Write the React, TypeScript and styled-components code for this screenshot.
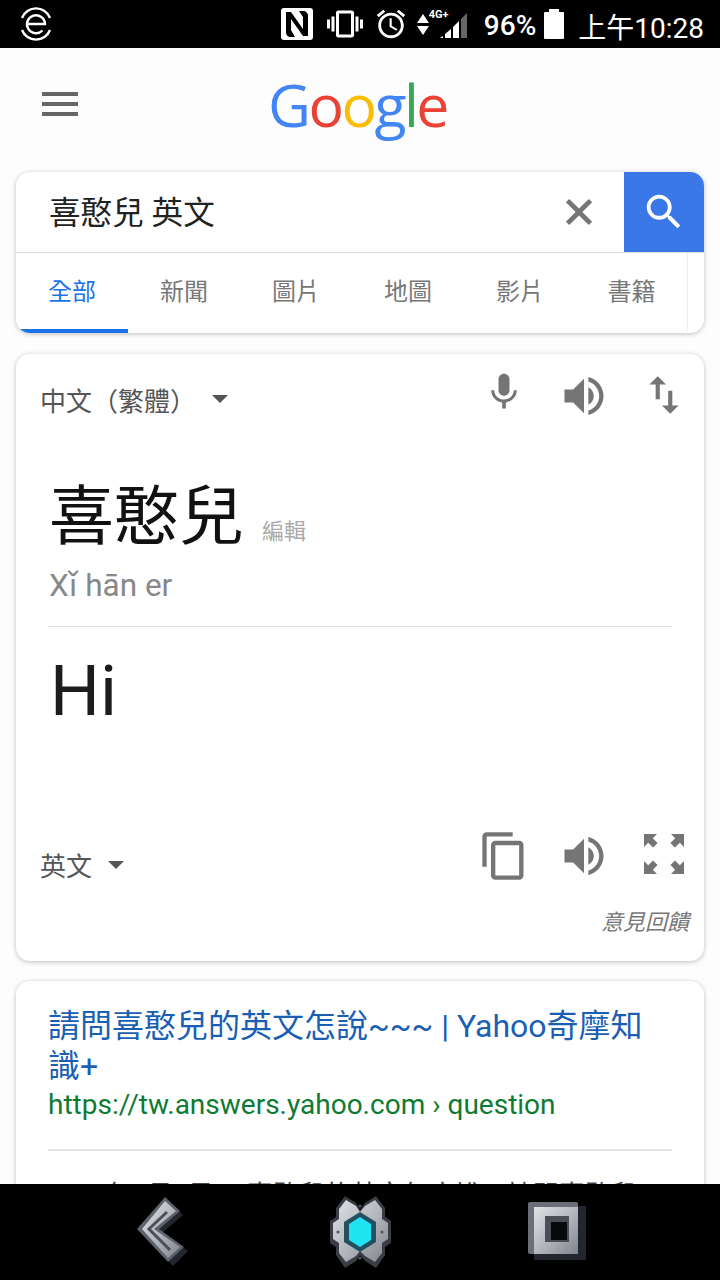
import React from 'react';
import styled, { createGlobalStyle } from 'styled-components';

const TABS = ['全部', '新聞', '圖片', '地圖', '影片', '書籍'];
const LOGO = [
  { letter: 'G', color: '#4285f4' },
  { letter: 'o', color: '#ea4335' },
  { letter: 'o', color: '#fbbc05' },
  { letter: 'g', color: '#4285f4' },
  { letter: 'l', color: '#34a853' },
  { letter: 'e', color: '#ea4335' },
];

const ICONS = {
  mic: 'M12 14c1.66 0 3-1.34 3-3V5c0-1.66-1.34-3-3-3S9 3.34 9 5v6c0 1.66 1.34 3 3 3zm5.3-3c0 3-2.54 5.1-5.3 5.1S6.7 14 6.7 11H5c0 3.41 2.72 6.23 6 6.72V21h2v-3.28c3.28-.48 6-3.3 6-6.72h-1.7z',
  volume: 'M3 9v6h4l5 5V4L7 9H3zm13.5 3c0-1.77-1.02-3.29-2.5-4.03v8.05c1.48-.73 2.5-2.25 2.5-4.02zM14 3.23v2.06c2.89.86 5 3.54 5 6.71s-2.11 5.85-5 6.71v2.06c4.01-.91 7-4.49 7-8.77s-2.99-7.86-7-8.77z',
  swap: 'M16 17.01V10h-2v7.01h-3L15 21l4-3.99h-3zM9 3L5 6.99h3V14h2V6.99h3L9 3z',
  copy: 'M16 1H4c-1.1 0-2 .9-2 2v14h2V3h12V1zm3 4H8c-1.1 0-2 .9-2 2v14c0 1.1.9 2 2 2h11c1.1 0 2-.9 2-2V7c0-1.1-.9-2-2-2zm0 16H8V7h11v14z',
  expand: 'M2 2h6.5L6.4 4.1l2.4 2.4-2.3 2.3-2.4-2.4L2 8.5zM22 2v6.5l-2.1-2.1-2.4 2.4-2.3-2.3 2.4-2.4L15.5 2zM2 22v-6.5l2.1 2.1 2.4-2.4 2.3 2.3-2.4 2.4L8.5 22zM22 22h-6.5l2.1-2.1-2.4-2.4 2.3-2.3 2.4 2.4 2.1-2.1z',
  search: 'M15.5 14h-.79l-.28-.27C15.41 12.59 16 11.11 16 9.5 16 5.91 13.09 3 9.5 3S3 5.91 3 9.5 5.91 16 9.5 16c1.61 0 3.09-.59 4.23-1.57l.27.28v.79l5 4.99L20.49 19l-4.99-5zm-6 0C7.01 14 5 11.99 5 9.5S7.01 5 9.5 5 14 7.01 14 9.5 11.99 14 9.5 14z',
  close: 'M19 6.41L17.59 5 12 10.59 6.41 5 5 6.41 10.59 12 5 17.59 6.41 19 12 13.41 17.59 19 19 17.59 13.41 12z',
  vibrate: 'M0 15h2V9H0v6zm3 2h2V7H3v10zm19-8v6h2V9h-2zm-3 8h2V7h-2v10zM16.5 3h-9C6.67 3 6 3.67 6 4.5v15c0 .83.67 1.5 1.5 1.5h9c.83 0 1.5-.67 1.5-1.5v-15c0-.83-.67-1.5-1.5-1.5zM16 19H8V5h8v14z',
  alarm: 'M22 5.72l-4.6-3.86-1.29 1.53 4.6 3.86L22 5.72zM7.88 3.39L6.6 1.86 2 5.71l1.29 1.53 4.59-3.85zM12.5 8H11v6l4.75 2.85.75-1.23-4-2.37V8zM12 4c-4.97 0-9 4.03-9 9s4.02 9 9 9c4.97 0 9-4.03 9-9s-4.03-9-9-9zm0 16c-3.87 0-7-3.13-7-7s3.13-7 7-7 7 3.13 7 7-3.13 7-7 7z',
};

function Icon({ name, size, color = '#757575', bold = 0 }: { name: keyof typeof ICONS; size: number; color?: string; bold?: number }) {
  return (
    <svg width={size} height={size} viewBox='0 0 24 24' fill={color} stroke={bold ? color : 'none'} strokeWidth={bold}>
      <path d={ICONS[name]} />
    </svg>
  );
}

function NfcMark() {
  return (
    <svg width='32' height='32' viewBox='0 0 32 32'>
      <rect width='32' height='32' rx='3' fill='#fff' />
      <path d='M5 4h5l12 17V9l-4-6h4c3 0 5 2 5 5v20h-5L10 11v11l4 7h-4c-3 0-5-2-5-5z' fill='#000' />
    </svg>
  );
}

function SteelDefs({ id }: { id: string }) {
  return (
    <defs>
      <linearGradient id={id} x1='0' y1='0' x2='1' y2='1'>
        <stop offset='0' stopColor='#e0e2e6' />
        <stop offset='0.55' stopColor='#b0b3b9' />
        <stop offset='1' stopColor='#80848c' />
      </linearGradient>
    </defs>
  );
}

function BackKey() {
  return (
    <svg width='54' height='70' viewBox='0 0 54 70'>
      <SteelDefs id='backSteel' />
      <path d='M28 2l15 14-21 18 26 18-15 15L2 34z' fill='#23262d' transform='translate(3 2)' />
      <path d='M28 0l15 14-21 18 25 18-16 15L0 32z' fill='#5d616b' />
      <path d='M28 4l11 10-22 18 26 18-12 11L5 32z' fill='url(#backSteel)' />
      <path d='M30 15L12 32l21 21' fill='none' stroke='#4a4e58' strokeWidth='3' />
    </svg>
  );
}

function HomeKey() {
  return (
    <svg width='70' height='74' viewBox='0 0 70 74'>
      <SteelDefs id='homeSteel' />
      <path
        d='M20 1l11 7 4 7 5-7 11-7 9 12v9l6 4v22l-6 4v8l-9 13-11-7-5-6-4 6-11 7-9-13v-8l-6-4V26l6-4v-9z'
        fill='#3a3d45'
      />
      <path
        d='M21 5l10 6 4 6 5-6 10-6 7 9v10l6 4v16l-6 4v10l-7 9-10-6-5-5-4 5-10 6-7-9V48l-6-4V28l6-4V14z'
        fill='url(#homeSteel)'
      />
      <path d='M35 17l16 10v20L35 57 19 47V27z' fill='#23505f' />
      <path d='M35 22l11 7v16l-11 7-11-7V29z' fill='#1fe3f2' />
      <circle cx='35' cy='11' r='1.6' fill='#55585f' />
      <circle cx='13' cy='37' r='1.6' fill='#55585f' />
      <circle cx='57' cy='37' r='1.6' fill='#55585f' />
      <circle cx='35' cy='63' r='1.6' fill='#55585f' />
    </svg>
  );
}

function RecentKey() {
  return (
    <svg width='60' height='60' viewBox='0 0 60 60'>
      <SteelDefs id='recentSteel' />
      <rect x='6' y='4' width='52' height='54' fill='#23262e' />
      <rect x='0' y='0' width='50' height='52' rx='2' fill='#6b6f78' />
      <rect x='6' y='5' width='44' height='47' fill='url(#recentSteel)' />
      <rect x='17' y='14' width='24' height='26' fill='#4a4e57' />
      <rect x='23' y='20' width='16' height='18' fill='#08090b' />
    </svg>
  );
}

export default function App() {
  return (
    <>
      <GlobalStyle />
      <Screen>
        <StatusBar>
          <svg width='34' height='34' viewBox='0 0 34 34' fill='none' stroke='#fff' strokeWidth='2.4'>
            <path d='M3 11a15 15 0 0 1 28 0M3 23a15 15 0 0 0 28 0' />
            <path d='M8 17h18a9 9 0 1 0-2.5 6.5' />
          </svg>
          <StatusRight>
            <NfcMark />
            <Slot $width={36} $left={14}>
              <Icon name='vibrate' size={36} color='#fff' />
            </Slot>
            <Slot $width={34} $left={11}>
              <Icon name='alarm' size={34} color='#fff' />
            </Slot>
            <Slot $width={52} $left={9}>
              <svg width='52' height='34' viewBox='0 0 52 34'>
                <path d='M6 7l6 9H0zM0 19h12l-6 9z' fill='#fff' />
                <path d='M50 6v25H44V12z' fill='#666' />
                <path d='M42 14v17h-6V20zM34 22v9h-6v-4zM26 29v2h-3z' fill='#fff' />
              </svg>
              <NetworkLabel>4G+</NetworkLabel>
            </Slot>
            <Percent>96%</Percent>
            <Battery />
            <Clock>上午10:28</Clock>
          </StatusRight>
        </StatusBar>

        <Content>
          <Header>
            <MenuButton>
              <span />
              <span />
              <span />
            </MenuButton>
            <Logo>
              {LOGO.map((item, index) => (
                <LogoLetter key={index} $color={item.color}>
                  {item.letter}
                </LogoLetter>
              ))}
            </Logo>
          </Header>

          <Card>
            <SearchRow>
              <Query>喜憨兒 英文</Query>
              <ClearButton>
                <Icon name='close' size={42} bold={0.7} />
              </ClearButton>
              <SearchButton>
                <Icon name='search' size={46} color='#fff' />
              </SearchButton>
            </SearchRow>
            <Tabs>
              {TABS.map((tab, index) => (
                <Tab key={tab} $active={index === 0}>
                  {tab}
                </Tab>
              ))}
            </Tabs>
          </Card>

          <TranslateCard>
            <LangRow>
              <LangPicker>
                中文（繁體）
                <Caret />
              </LangPicker>
              <Actions>
                <ActionSlot><Icon name='mic' size={44} /></ActionSlot>
                <ActionSlot><Icon name='volume' size={52} /></ActionSlot>
                <ActionSlot><Icon name='swap' size={50} /></ActionSlot>
              </Actions>
            </LangRow>
            <SourceLine>
              <SourceText>喜憨兒</SourceText>
              <EditLink>編輯</EditLink>
            </SourceLine>
            <Pinyin>Xǐ hān er</Pinyin>
            <Divider />
            <TargetText>Hi</TargetText>
            <TargetRow>
              <TargetLang>
                英文
                <Caret />
              </TargetLang>
              <Actions>
                <ActionSlot><Icon name='copy' size={52} /></ActionSlot>
                <ActionSlot><Icon name='volume' size={52} /></ActionSlot>
                <ActionSlot><Icon name='expand' size={48} /></ActionSlot>
              </Actions>
            </TargetRow>
            <Feedback>意見回饋</Feedback>
          </TranslateCard>

          <ResultCard>
            <ResultTitle>請問喜憨兒的英文怎說~~~ | Yahoo奇摩知識+</ResultTitle>
            <ResultUrl>https://tw.answers.yahoo.com › question</ResultUrl>
            <ResultDivider />
            <Snippet>2006年1月5日 — 喜憨兒的英文怎麼說？請問喜憨兒</Snippet>
          </ResultCard>
        </Content>

        <NavBar>
          <BackKey />
          <HomeKey />
          <RecentKey />
        </NavBar>
      </Screen>
    </>
  );
}

const GlobalStyle = createGlobalStyle`
  * {
    box-sizing: border-box;
  }

  body {
    margin: 0;
    background: #000;
    font-family: Roboto, 'Noto Sans CJK TC', sans-serif;
  }
`;

const Screen = styled.div`
  display: flex;
  flex-direction: column;
  width: 720px;
  height: 1280px;
  overflow: hidden;
  background: #fff;
`;

const StatusBar = styled.div`
  display: flex;
  flex: none;
  justify-content: space-between;
  align-items: center;
  height: 48px;
  padding: 0 16px 0 19px;
  background: #000;
  color: #fff;
`;

const StatusRight = styled.div`
  display: flex;
  align-items: center;
`;

const Slot = styled.div<{ $width: number; $left: number }>`
  position: relative;
  display: flex;
  width: ${({ $width }) => $width}px;
  margin-left: ${({ $left }) => $left}px;
`;

const NetworkLabel = styled.span`
  position: absolute;
  top: 1px;
  left: 12px;
  font-size: 11px;
  font-weight: 700;
  color: #fff;
`;

const Percent = styled.span`
  margin-left: 15px;
  padding-top: 3px;
  font-size: 28px;
  font-weight: 500;
`;

const Battery = styled.div`
  position: relative;
  width: 20px;
  height: 27px;
  margin-top: 3px;
  margin-left: 8px;
  background: #fff;
  border-radius: 1px;

  &::before {
    content: '';
    position: absolute;
    top: -3px;
    left: 5px;
    width: 10px;
    height: 3px;
    background: #fff;
  }
`;

const Clock = styled.span`
  margin-left: 14px;
  padding-top: 3px;
  font-size: 28px;
`;

const Content = styled.div`
  flex: 1;
  min-height: 0;
  overflow: hidden;
  padding: 0 16px;
  background: #fdfdfd;
`;

const Header = styled.div`
  position: relative;
  display: flex;
  justify-content: center;
  align-items: center;
  height: 124px;
`;

const MenuButton = styled.div`
  position: absolute;
  top: 44px;
  left: 26px;
  display: flex;
  flex-direction: column;
  gap: 6px;

  span {
    width: 36px;
    height: 4px;
    background: #666;
  }
`;

const Logo = styled.div`
  margin-top: -11px;
  margin-left: -5px;
  font-family: 'Open Sans', sans-serif;
  font-size: 59px;
  font-weight: 500;
  line-height: 1;
  letter-spacing: -2.5px;
`;

const LogoLetter = styled.span<{ $color: string }>`
  color: ${({ $color }) => $color};
`;

const Card = styled.div`
  overflow: hidden;
  background: #fff;
  border-radius: 14px;
  box-shadow: 0 1px 5px rgba(0, 0, 0, 0.25);
`;

const SearchRow = styled.div`
  display: flex;
  align-items: center;
  height: 81px;
  border-bottom: 1px solid #dcdcdc;
`;

const Query = styled.div`
  flex: 1;
  padding-bottom: 5px;
  padding-left: 33px;
  font-size: 31.6px;
  color: #222;
`;

const ClearButton = styled.div`
  display: flex;
  justify-content: center;
  width: 90px;
`;

const SearchButton = styled.div`
  display: flex;
  justify-content: center;
  align-items: center;
  width: 80px;
  height: 80px;
  background: #3b78e7;
`;

const Tabs = styled.div`
  display: flex;
  height: 80px;
`;

const Tab = styled.div<{ $active: boolean }>`
  display: flex;
  justify-content: center;
  align-items: center;
  width: 112px;
  padding-bottom: 3px;
  font-size: 24px;
  color: ${({ $active }) => ($active ? '#1a73e8' : '#777')};
  border-bottom: 4px solid ${({ $active }) => ($active ? '#1a73e8' : 'transparent')};

  &:last-child {
    border-right: 1px solid #eee;
  }
`;

const TranslateCard = styled(Card)`
  display: flex;
  flex-direction: column;
  height: 607px;
  margin-top: 21px;
  padding-left: 25px;
`;

const LangRow = styled.div`
  display: flex;
  justify-content: space-between;
  align-items: center;
  height: 80px;
  padding-top: 4px;
`;

const LangPicker = styled.div`
  display: flex;
  align-items: center;
  margin-left: -1px;
  padding-top: 6px;
  font-size: 26px;
  color: #555;
`;

const Caret = styled.span`
  width: 0;
  height: 0;
  margin-left: 16px;
  border-top: 8px solid #555;
  border-right: 8px solid transparent;
  border-left: 8px solid transparent;
`;

const Actions = styled.div`
  display: flex;
`;

const ActionSlot = styled.div`
  display: flex;
  justify-content: center;
  width: 80px;
`;

const SourceLine = styled.div`
  display: flex;
  align-items: baseline;
  margin-top: 45px;
  margin-left: 8px;
`;

const SourceText = styled.div`
  font-size: 65px;
  line-height: 76px;
  color: #111;
`;

const EditLink = styled.div`
  margin-left: 18px;
  font-size: 22px;
  color: #aaa;
`;

const Pinyin = styled.div`
  margin-top: 11px;
  margin-left: 8px;
  font-size: 31.5px;
  line-height: 40px;
  color: #888;
`;

const Divider = styled.div`
  height: 1px;
  margin: 20px 32px 0 7px;
  background: #dedede;
`;

const TargetText = styled.div`
  margin-top: 22px;
  margin-left: 9px;
  font-size: 70px;
  line-height: 84px;
  color: #1c1c1c;
`;

const TargetRow = styled.div`
  display: flex;
  justify-content: space-between;
  align-items: center;
  margin-top: auto;
`;

const TargetLang = styled(LangPicker)`
  padding-top: 18px;
`;

const Feedback = styled.div`
  align-self: flex-end;
  height: 78px;
  padding: 21px 15px 0 0;
  font-size: 22px;
  font-style: italic;
  color: #777;
`;

const ResultCard = styled(Card)`
  height: 260px;
  margin-top: 20px;
  padding: 25px 32px 0;
`;

const ResultTitle = styled.div`
  max-width: 600px;
  font-size: 32px;
  line-height: 40px;
  color: #1a5fb4;
`;

const ResultUrl = styled.div`
  font-size: 28px;
  line-height: 38px;
  color: #0f7a32;
`;

const ResultDivider = styled.div`
  height: 2px;
  margin-top: 25px;
  background: #e4e4e4;
`;

const Snippet = styled.div`
  margin-top: 26px;
  font-size: 26px;
  line-height: 36px;
  color: #444;
  white-space: nowrap;
`;

const NavBar = styled.div`
  display: flex;
  flex: none;
  justify-content: space-between;
  align-items: center;
  height: 96px;
  padding: 0 132px 0 137px;
  background: #000;
`;
